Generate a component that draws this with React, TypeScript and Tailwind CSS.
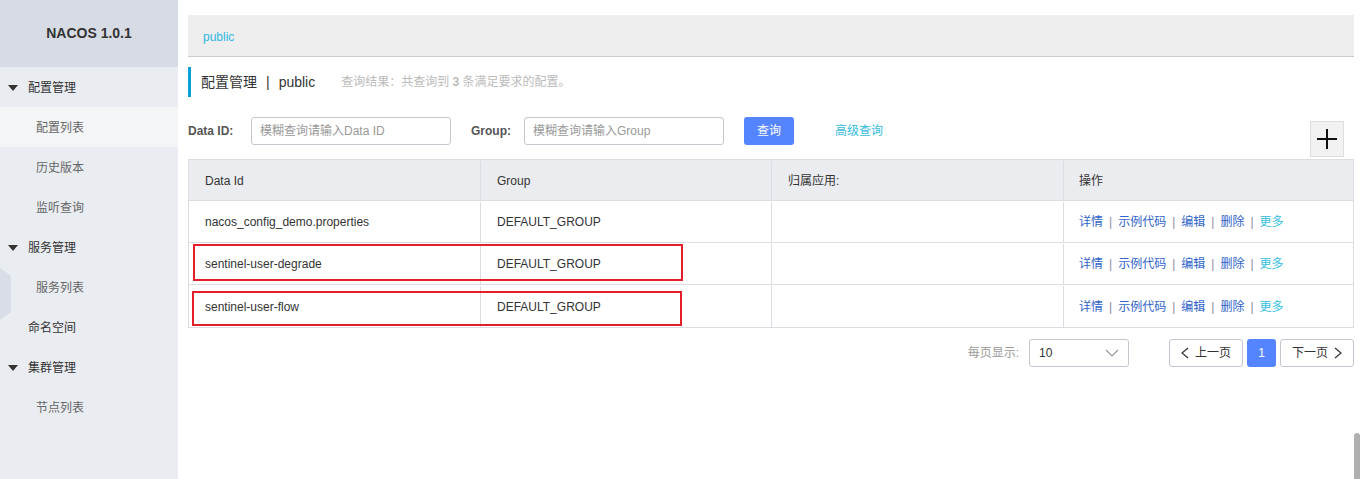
import React from "react";

const font = { fontFamily: '"Liberation Sans", "Noto Sans CJK SC", sans-serif' };

function Caret() {
  return (
    <svg width="10" height="6" viewBox="0 0 10 6" className="mr-[10px]">
      <path d="M0 0 L10 0 L5 6 Z" fill="#333" />
    </svg>
  );
}

function Sidebar() {
  const group = "h-10 flex items-center pl-[8px] pt-[2px] text-[12px] text-[#333]";
  const sub = "h-10 flex items-center pl-[36px] pt-[2px] text-[12px] text-[#666]";
  return (
    <div className="w-[178px] shrink-0 bg-[#e9ecf1] min-h-[479px] relative">
      <div className="h-[67px] bg-[#d7dce4] flex items-center justify-center text-[14px] font-bold text-[#333]">
        NACOS 1.0.1
      </div>
      <div className={group}><Caret />配置管理</div>
      <div className={sub + " bg-[#f4f5f7]"}>配置列表</div>
      <div className={sub}>历史版本</div>
      <div className={sub}>监听查询</div>
      <div className={group}><Caret />服务管理</div>
      <div className={sub}>服务列表</div>
      <div className="h-10 flex items-center pl-[28px] pt-[2px] text-[12px] text-[#333]">命名空间</div>
      <div className={group}><Caret />集群管理</div>
      <div className={sub}>节点列表</div>
      <svg className="absolute left-0 top-[268px]" width="12" height="52" viewBox="0 0 12 52">
        <path d="M0 0 L11 8 L11 44 L0 52 Z" fill="#d9dde5" />
      </svg>
    </div>
  );
}

function Actions() {
  const sep = <span className="mx-[6px] text-[#8a8aa0]">|</span>;
  return (
    <span className="text-[12px] text-[#2f63c9]">
      详情{sep}示例代码{sep}编辑{sep}删除{sep}<span className="text-[#33c0e0]">更多</span>
    </span>
  );
}

export default function App() {
  const rows = [
    { id: "nacos_config_demo.properties", box: false },
    { id: "sentinel-user-degrade", box: true },
    { id: "sentinel-user-flow", box: true },
  ];
  const cell = "px-[16px] flex items-center border-r border-[#dcdde3]";
  return (
    <div className="flex w-[1364px] h-[479px] overflow-hidden bg-white relative" style={font}>
      <Sidebar />
      <div className="flex-1 pl-[10px] pr-[10px] pt-[15px]">
        <div className="h-[42px] bg-[#eeeeee] border-b border-[#cccccc] flex items-center pl-[15px] pt-[3px] text-[12px] text-[#2cb8e0]">
          public
        </div>
        <div className="mt-[10px] h-[30px] border-l-[3px] border-[#0ba1d8] flex items-center pl-[10px]">
          <span className="text-[14px] text-[#333]">配置管理</span>
          <span className="text-[14px] text-[#333] mx-[9px]">|</span>
          <span className="text-[14px] text-[#333]">public</span>
          <span className="ml-[26px] text-[12px] text-[#bbb]">
            查询结果：共查询到 <b className="font-bold">3</b> 条满足要求的配置。
          </span>
        </div>
        <div className="flex items-center mt-[20px] h-[28px] relative">
          <span className="text-[12px] font-bold text-[#555] w-[63px]">Data ID:</span>
          <div className="w-[200px] h-[28px] border border-[#c4c6cf] rounded-[3px] flex items-center pl-[8px] text-[12px] text-[#999]">
            模糊查询请输入Data ID
          </div>
          <span className="ml-[20px] text-[12px] font-bold text-[#555] w-[53px]">Group:</span>
          <div className="w-[200px] h-[28px] border border-[#c4c6cf] rounded-[3px] flex items-center pl-[8px] text-[12px] text-[#999]">
            模糊查询请输入Group
          </div>
          <div className="ml-[20px] w-[50px] h-[28px] rounded-[3px] bg-[#5485ff] text-white text-[12px] flex items-center justify-center">
            查询
          </div>
          <span className="ml-[41px] text-[12px] text-[#33bbdd]">高级查询</span>
          <div className="absolute right-[10px] top-[4px] w-[34px] h-[36px] bg-[#f2f2f2] border border-[#dddddd] flex items-center justify-center">
            <svg width="20" height="20" viewBox="0 0 20 20">
              <path d="M10 0 V20 M0 10 H20" stroke="#111" strokeWidth="2" />
            </svg>
          </div>
        </div>
        <div className="mt-[14px] border border-[#dcdde3]">
          <div className="flex h-[41px] bg-[#ebecf0] border-b border-[#dcdde3] text-[12px] text-[#333] pt-[1px]">
            <div className={cell + " w-[292px]"}>Data Id</div>
            <div className={cell + " w-[291px]"}>Group</div>
            <div className={cell + " w-[292px]"}>归属应用:</div>
            <div className="px-[15px] flex items-center flex-1">操作</div>
          </div>
          {rows.map((r, i) => (
            <div key={i} className={"flex h-[42px] text-[12px] text-[#333] relative pt-[1px]" + (i < 2 ? " border-b border-[#dcdde3]" : "")}>
              <div className={cell + " w-[292px]"}>{r.id}</div>
              <div className={cell + " w-[291px]"}>DEFAULT_GROUP</div>
              <div className={cell + " w-[292px]"}></div>
              <div className="px-[15px] flex items-center flex-1"><Actions /></div>
              {r.box && (
                <div className={"absolute border-2 border-[#e3202a] w-[490px] " + (i === 1 ? "top-[1px] h-[37px] left-[4px]" : "top-[6px] h-[35px] left-[3px]")} />
              )}
            </div>
          ))}
        </div>
        <div className="flex items-center justify-end mt-[11px] h-[28px] text-[12px]">
          <span className="text-[#999] mr-[10px]">每页显示:</span>
          <div className="w-[100px] h-[28px] border border-[#c4c6cf] rounded-[3px] flex items-center justify-between px-[9px] text-[#333]">
            <span>10</span>
            <svg width="14" height="8" viewBox="0 0 14 8">
              <path d="M1 1 L7 7 L13 1" stroke="#999" strokeWidth="1.2" fill="none" />
            </svg>
          </div>
          <div className="ml-[40px] w-[74px] h-[28px] border border-[#c4c6cf] rounded-[3px] flex items-center justify-center text-[#333]">
            <svg width="8" height="12" viewBox="0 0 8 12" className="mr-[6px]">
              <path d="M7 1 L1 6 L7 11" stroke="#333" strokeWidth="1.2" fill="none" />
            </svg>
            上一页
          </div>
          <div className="ml-[4px] w-[29px] h-[28px] rounded-[3px] bg-[#5485ff] text-white flex items-center justify-center">1</div>
          <div className="ml-[4px] w-[74px] h-[28px] border border-[#c4c6cf] rounded-[3px] flex items-center justify-center text-[#333]">
            下一页
            <svg width="8" height="12" viewBox="0 0 8 12" className="ml-[6px]">
              <path d="M1 1 L7 6 L1 11" stroke="#333" strokeWidth="1.2" fill="none" />
            </svg>
          </div>
        </div>
      </div>
      <div className="absolute right-[4px] top-[433px] w-[6px] h-[46px] rounded-t-[3px] bg-[#b0b0b0]" />
    </div>
  );
}
